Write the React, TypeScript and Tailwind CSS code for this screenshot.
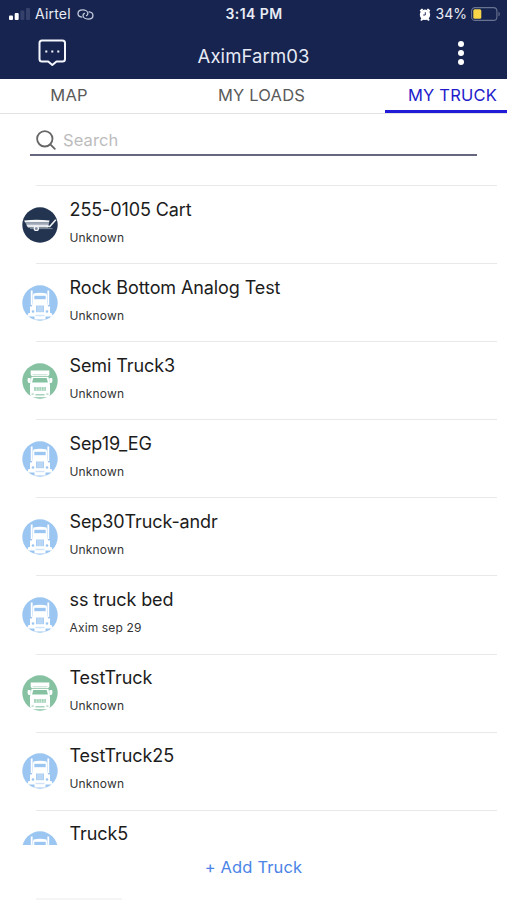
import React from 'react';

const trucks = [
  { name: '255-0105 Cart', status: 'Unknown', icon: 'cart' },
  { name: 'Rock Bottom Analog Test', status: 'Unknown', icon: 'semi' },
  { name: 'Semi Truck3', status: 'Unknown', icon: 'truck' },
  { name: 'Sep19_EG', status: 'Unknown', icon: 'semi' },
  { name: 'Sep30Truck-andr', status: 'Unknown', icon: 'semi' },
  { name: 'ss truck bed', status: 'Axim sep 29', icon: 'semi' },
  { name: 'TestTruck', status: 'Unknown', icon: 'truck' },
  { name: 'TestTruck25', status: 'Unknown', icon: 'semi' },
  { name: 'Truck5', status: '', icon: 'semi' },
];

const CartIcon = () => (
  <svg viewBox="0 0 36 36" className="w-9 h-9 shrink-0">
    <circle cx="18" cy="18" r="17.7" fill="#22344f" />
    <path d="M2.2 13.6q12-1.6 25.300 0l-.5 2H3z" fill="#f4f6f8" />
    <path d="M3.200 15.400h24L26 19.500H5.600z" fill="#9da7b6" />
    <path d="M4.200 17.800h22.500l-1 2.700H6z" fill="#e6e9ee" />
    <path d="M24.500 19.500h3.300l6-6.700" fill="none" stroke="#f4f6f8" strokeWidth="1.600" />
    <path d="M8 21.600h22.500" stroke="#9aa5b5" strokeWidth=".8" />
    <circle cx="14.300" cy="21.400" r="2.100" fill="#8490a3" stroke="#f4f6f8" strokeWidth="1.200" />
  </svg>
);

const SemiIcon = () => (
  <svg viewBox="0 0 36 36" className="w-9 h-9 shrink-0">
    <circle cx="18" cy="18" r="17.7" fill="#9cc6f2" />
    <g fill="#fff">
      <path d="M8.800 5.500h1.800v14.500H8.800zM25.400 5.500h1.800v14.500h-1.800z" />
      <path d="M11.500 8.600Q18 7 24.500 8.600l.6 2.400v9H10.900v-9z" />
      <path d="M11 18h14l1.200 3.500h1.800v6.500h1.500l1.500 3.500H5l1.500-3.500H8v-6.500h1.800z" />
      <path d="M12.500 30h11v4.500h-11z" />
    </g>
    <path d="M12.300 10.800h11.400v3.400H12.300z" fill="#9cc6f2" />
    <path d="M14 20.500h8v6.700h-8z" fill="#a9cdf3" />
    <path d="M16 21v5.800M18 21v5.800M20 21v5.800" stroke="#e1eefb" strokeWidth=".6" />
    <circle cx="11" cy="26.500" r="1.300" fill="#9cc6f2" />
    <circle cx="25" cy="26.500" r="1.300" fill="#9cc6f2" />
    <path d="M13.500 29.800h9v1.400h-9z" fill="#cfe3f9" />
  </svg>
);

const TruckIcon = () => (
  <svg viewBox="0 0 36 36" className="w-9 h-9 shrink-0">
    <circle cx="18" cy="18" r="17.7" fill="#86c1a2" />
    <g fill="#fff">
      <path d="M8.700 7.600h18.600v3.800l-.9 1.600H9.600l-.9-1.600z" />
      <path d="M9.600 13.800h16.800l1.600 8v9.500l-1 3H9l-1-3v-9.500z" />
      <path d="M5.800 15h2.900v5H6.500Q5 17.500 5.800 15zM27.300 15h2.900q.8 2.500-.7 5h-2.200z" />
    </g>
    <path d="M10.500 11.300h15l-.5 1H11z" fill="#c2dfd0" />
    <path d="M11.300 15h13.400l1.200 4.600H10.100z" fill="#86c1a2" />
    <path d="M12 24h12v3.800H12z" fill="#a9d4bd" />
    <path d="M14.500 24v3.800M17 24v3.800M19.500 24v3.800M22 24v3.800" stroke="#e7f4ed" strokeWidth=".6" />
    <path d="M9.500 30.500h2.300v1.200H9.500zM24.200 30.500h2.300v1.200h-2.300zM13.500 31h9v1.600h-9z" fill="#a9d4bd" />
  </svg>
);

const icons: Record<string, React.ReactNode> = {
  cart: <CartIcon />,
  semi: <SemiIcon />,
  truck: <TruckIcon />,
};

const StatusBar = () => (
  <div className="h-7 grid grid-cols-3 items-center pl-[9px] pr-[6px] text-[14px] leading-7 text-[#e9ecf5]">
    <div className="flex items-center">
      <svg viewBox="0 0 22 14" className="w-[22px] h-[14px]">
        <rect x="0" y="8.5" width="4" height="4.5" rx="1" fill="#fff" />
        <rect x="5.7" y="6" width="4" height="7" rx="1" fill="#fff" />
        <rect x="11.4" y="3.5" width="4" height="9.5" rx="1" fill="#36416b" />
        <rect x="17" y="1" width="4" height="12" rx="1" fill="#36416b" />
      </svg>
      <span className="ml-1 tracking-[0.2px]">Airtel</span>
      <svg viewBox="0 0 18 12" className="ml-1.5 w-[17px] h-[11px]" fill="none" stroke="#c5cbdd" strokeWidth="1.4" strokeLinecap="round">
        <path d="M5 8.800C2.600 8.600.8 7.100.8 5 .8 2.600 3 1 6 1c3.100 0 5.600 1.700 5.600 4 0 1-.5 1.800-1.500 2.300" />
        <path d="M12.800 3.200c2.500.2 4.300 1.700 4.300 3.800 0 2.400-2.200 4-5.200 4C8.800 11 6.300 9.300 6.300 7c0-1 .5-1.800 1.500-2.300" />
      </svg>
    </div>
    <div className="text-center font-semibold tracking-[0.45px] -ml-0.5">3:14 PM</div>
    <div className="flex items-center justify-end">
      <svg viewBox="0 0 12 13" className="w-3 h-[13px]">
        <path d="M1.900 2.700L3 1.600M10.100 2.700L9 1.600M2.500 11.800l1-1.200M9.500 11.800l-1-1.200" stroke="#fff" strokeWidth="2" strokeLinecap="round" />
        <circle cx="6" cy="6.7" r="5.2" fill="#fff" />
        <path d="M6.300 4.200v2.800H4.200" fill="none" stroke="#16244f" strokeWidth=".9" />
      </svg>
      <span className="ml-[5px]">34%</span>
      <svg viewBox="0 0 30 14" className="ml-1 w-[30px] h-[14px]">
        <rect x=".6" y=".6" width="25.3" height="12.8" rx="3.5" fill="none" stroke="#6a7390" strokeWidth="1.1" />
        <rect x="2.3" y="2.3" width="8" height="9.4" rx="1.5" fill="#f8d648" />
        <path d="M27.500 4.700c1.700.7 1.700 3.900 0 4.600z" fill="#6a7390" />
      </svg>
    </div>
  </div>
);

const Header = () => (
  <header className="h-[79px] bg-[#16244f]">
    <StatusBar />
    <div className="h-[51px] grid grid-cols-[1fr_auto_1fr] items-center pl-[38px] pr-[42px] pb-0.5">
      <svg viewBox="0 0 28 27" className="w-7 h-[27px]" fill="none" stroke="#f5f7ff" strokeWidth="2" strokeLinejoin="round">
        <path d="M4 1.500h20.500Q27 1.500 27 4v16q0 2.500-2.500 2.500h-6L14.300 26l-4.100-3.500H4Q1.500 22.500 1.500 20V4Q1.500 1.500 4 1.500z" />
        <path d="M7.300 12.500h2M13.300 12.500h2M19.300 12.500h2" />
      </svg>
      <h1 className="text-[18.5px] leading-6 pt-1.5 pl-1 tracking-[0.1px] text-[#e6eaf5]">AximFarm03</h1>
      <svg viewBox="0 0 8 26" className="w-2 h-[26px] justify-self-end" fill="#fff">
        <circle cx="4" cy="4" r="3" />
        <circle cx="4" cy="13" r="3" />
        <circle cx="4" cy="22" r="3" />
      </svg>
    </div>
  </header>
);

const Tabs = () => (
  <nav className="h-[35px] flex justify-between border-b border-[#e2e2e2] text-[16.5px] leading-8 tracking-[0.2px] text-[#5a5a5a]">
    <div className="w-[138px] text-center">MAP</div>
    <div className="w-[136px] text-center">MY LOADS</div>
    <div className="w-[122px] h-[34px] pr-2.5 text-right text-[#211bcb] border-b-[3px] border-[#211bd8]">MY TRUCK</div>
  </nav>
);

const App = () => {
  return (
    <div className="h-[900px] w-full flex flex-col overflow-hidden bg-white font-['Inter',sans-serif]">
      <Header />
      <Tabs />
      <div className="mx-[30px] h-[42px] shrink-0 flex items-center border-b-2 border-[#66677f] pl-1.5 pt-2.5">
        <svg viewBox="0 0 20 20" className="mt-px w-5 h-5" fill="none" stroke="#666" strokeWidth="1.8" strokeLinecap="round">
          <circle cx="8.8" cy="8.8" r="7.7" />
          <path d="M14.300 14.300l4.500 4.500" />
        </svg>
        <span className="ml-[7px] pt-[3px] text-[16.5px] tracking-[0.1px] text-[#bcbcbc]">Search</span>
      </div>
      <div className="mt-[29px] h-[660px] shrink-0 overflow-hidden">
        {trucks.map((truck) => (
          <div key={truck.name} className="h-[78.1px] flex pl-[22px] pr-2.5">
            <div className="pt-[21.5px]">{icons[truck.icon]}</div>
            <div className="-ml-[22px] flex-1 border-t border-[#e9e9e9] pl-[33.5px] pt-[11.5px]">
              <div className="text-[18px] leading-6 tracking-[-0.1px] text-[#1c1c1c]">{truck.name}</div>
              {truck.status && (
                <div className="mt-2 text-[12px] leading-4 tracking-[0.15px] text-[#333]">{truck.status}</div>
              )}
            </div>
          </div>
        ))}
      </div>
      <button className="h-[45px] shrink-0 text-[16.5px] tracking-[0.15px] text-[#4b84e6]">+ Add Truck</button>
      <div className="mt-2 ml-9 w-[86px] h-0.5 bg-[#f5f5f5]" />
    </div>
  );
};

export default App;
